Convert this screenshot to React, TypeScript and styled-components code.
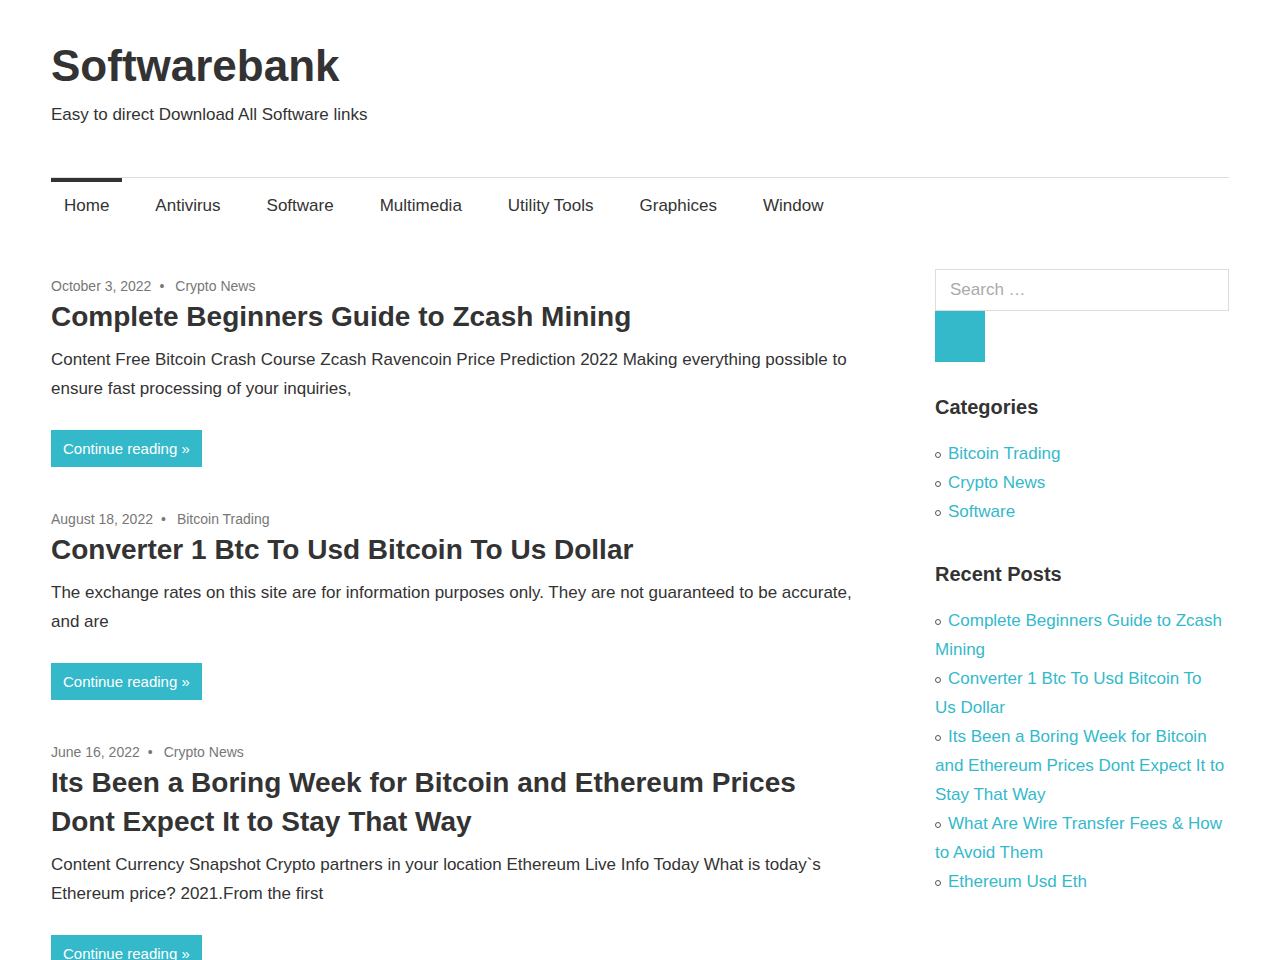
import React from 'react'
import styled, { createGlobalStyle } from 'styled-components'

const accent = '#34b9cb'

const GlobalStyle = createGlobalStyle`
	body {
		margin: 0;
		background: #fff;
		color: #333;
		font-family: 'Liberation Sans', Arial, sans-serif;
	}
	a {
		text-decoration: none;
	}
`

const navItems = ['Home', 'Antivirus', 'Software', 'Multimedia', 'Utility Tools', 'Graphices', 'Window']

const posts = [
	{
		date: 'October 3, 2022',
		category: 'Crypto News',
		title: 'Complete Beginners Guide to Zcash Mining',
		excerpt:
			'Content Free Bitcoin Crash Course Zcash Ravencoin Price Prediction 2022 Making everything possible to ensure fast processing of your inquiries,',
	},
	{
		date: 'August 18, 2022',
		category: 'Bitcoin Trading',
		title: 'Converter 1 Btc To Usd Bitcoin To Us Dollar',
		excerpt:
			'The exchange rates on this site are for information purposes only. They are not guaranteed to be accurate, and are',
	},
	{
		date: 'June 16, 2022',
		category: 'Crypto News',
		title: 'Its Been a Boring Week for Bitcoin and Ethereum Prices Dont Expect It to Stay That Way',
		excerpt:
			'Content Currency Snapshot Crypto partners in your location Ethereum Live Info Today What is today`s Ethereum price? 2021.From the first',
	},
]

const categories = ['Bitcoin Trading', 'Crypto News', 'Software']

const recentPosts = [
	'Complete Beginners Guide to Zcash Mining',
	'Converter 1 Btc To Usd Bitcoin To Us Dollar',
	'Its Been a Boring Week for Bitcoin and Ethereum Prices Dont Expect It to Stay That Way',
	'What Are Wire Transfer Fees & How to Avoid Them',
	'Ethereum Usd Eth',
]

function App() {
	return (
		<>
			<GlobalStyle />
			<Page>
				<Header>
					<SiteTitle>Softwarebank</SiteTitle>
					<Tagline>Easy to direct Download All Software links</Tagline>
				</Header>
				<Nav>
					{navItems.map((item, index) => (
						<NavItem key={item} $active={index === 0}>
							{item}
						</NavItem>
					))}
				</Nav>
				<Main>
					<Content>
						{posts.map((post) => (
							<Post key={post.title}>
								<Meta>
									<span>{post.date}</span>
									<Dot>•</Dot>
									<span>{post.category}</span>
								</Meta>
								<PostTitle>{post.title}</PostTitle>
								<Excerpt>{post.excerpt}</Excerpt>
								<MoreButton>Continue reading »</MoreButton>
							</Post>
						))}
					</Content>
					<Sidebar>
						<SearchForm>
							<SearchInput placeholder='Search …' />
							<SearchButton />
						</SearchForm>
						<Widget>
							<WidgetTitle>Categories</WidgetTitle>
							<LinkList>
								{categories.map((c) => (
									<li key={c}>
										<a href='#'>{c}</a>
									</li>
								))}
							</LinkList>
						</Widget>
						<Widget>
							<WidgetTitle>Recent Posts</WidgetTitle>
							<LinkList>
								{recentPosts.map((p) => (
									<li key={p}>
										<a href='#'>{p}</a>
									</li>
								))}
							</LinkList>
						</Widget>
					</Sidebar>
				</Main>
			</Page>
		</>
	)
}

const Page = styled.div`
	max-width: 1178px;
	margin: 0 auto;
`

const Header = styled.header`
	padding: 38px 0 50px;
`

const SiteTitle = styled.h1`
	margin: 0;
	font-size: 44px;
	line-height: 56px;
	font-weight: bold;
	color: #333;
`

const Tagline = styled.p`
	margin: 9px 0 0;
	font-size: 17px;
	line-height: 24px;
	color: #333;
`

const Nav = styled.nav`
	display: flex;
	gap: 20px;
	border-top: 1px solid #ddd;
`

const NavItem = styled.a<{ $active?: boolean }>`
	display: block;
	padding: 11px 13px 11px;
	border-top: 4px solid ${(p) => (p.$active ? '#333' : 'transparent')};
	font-size: 17px;
	line-height: 26px;
	color: #333;
`

const Main = styled.div`
	display: flex;
	justify-content: space-between;
	padding-top: 39px;
`

const Content = styled.main`
	width: 808px;
`

const Post = styled.article`
	margin-bottom: 35px;
`

const Meta = styled.div`
	font-size: 14px;
	line-height: 21px;
	color: #777;
	padding-top: 7px;
`

const Dot = styled.span`
	margin: 0 11px 0 8px;
`

const PostTitle = styled.h2`
	margin: 0;
	font-size: 28px;
	line-height: 39px;
	font-weight: bold;
	color: #333;
`

const Excerpt = styled.p`
	margin: 9px 0 0;
	font-size: 17px;
	line-height: 29px;
	color: #333;
`

const MoreButton = styled.a`
	display: inline-block;
	margin-top: 27px;
	padding: 8px 12px;
	background: ${accent};
	color: #fff;
	font-size: 15px;
	line-height: 21px;
`

const Sidebar = styled.aside`
	width: 294px;
`

const SearchForm = styled.form`
	margin-bottom: 31px;
`

const Widget = styled.section`
	margin-bottom: 34px;
`

const SearchInput = styled.input`
	display: block;
	box-sizing: border-box;
	width: 100%;
	height: 42px;
	padding: 0 14px;
	border: 1px solid #ddd;
	font-family: inherit;
	font-size: 17px;
	color: #333;
	outline: none;
	&::placeholder {
		color: #aaa;
	}
`

const SearchButton = styled.button`
	display: block;
	width: 50px;
	height: 51px;
	border: none;
	background: ${accent};
	padding: 0;
`

const WidgetTitle = styled.h3`
	margin: 0 0 18px;
	font-size: 20px;
	line-height: 28px;
	font-weight: bold;
	color: #333;
`

const LinkList = styled.ul`
	margin: 0;
	padding: 0 4px 0 0;
	list-style: none;
	font-size: 17px;
	line-height: 29px;
	color: #333;
	li::before {
		content: '';
		display: inline-block;
		box-sizing: border-box;
		width: 6px;
		height: 6px;
		margin-right: 7px;
		border: 1px solid #555;
		border-radius: 50%;
		vertical-align: 1px;
	}
	a {
		color: ${accent};
	}
`

export default App
